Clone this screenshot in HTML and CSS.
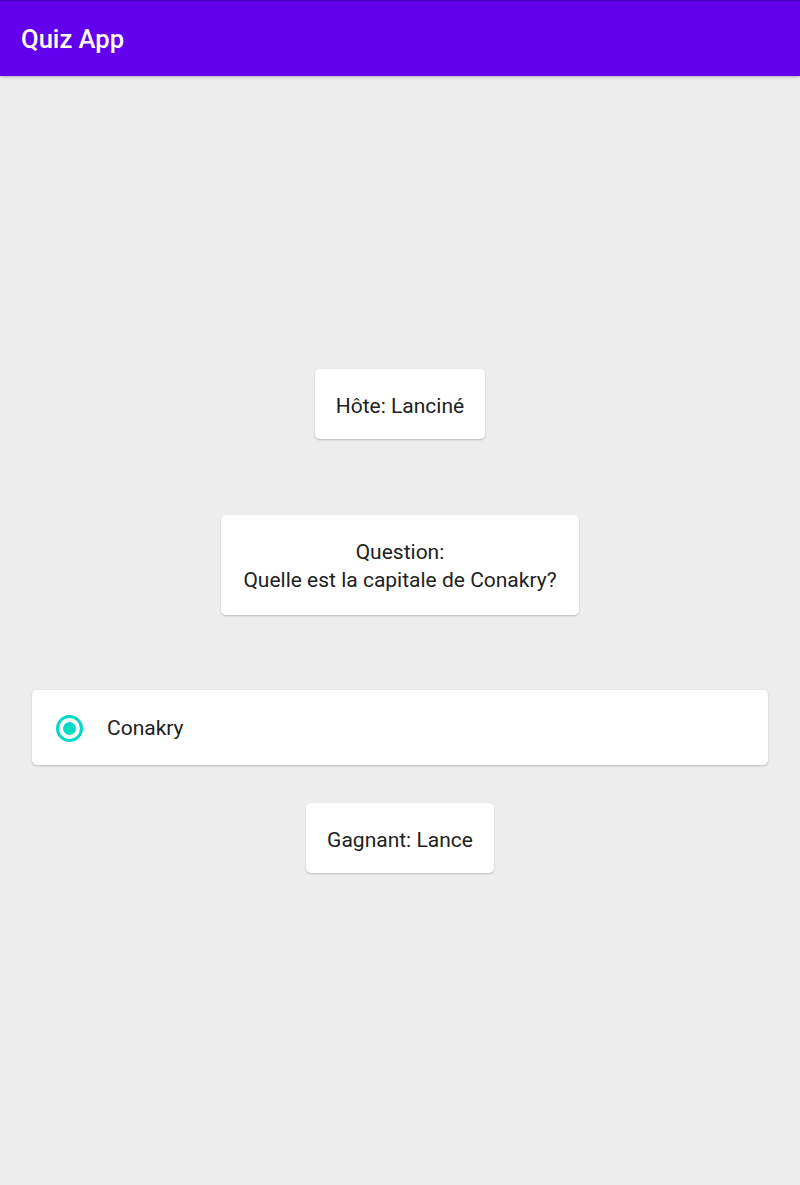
FILE: index.html
```html
<!DOCTYPE html>
<html lang="fr">
<head>
<meta charset="utf-8">
<title>Quiz App</title>
<link rel="stylesheet" href="styles.css">
</head>
<body>
<header class="appbar"><h1 class="title">Quiz App</h1></header>
<main class="content">
  <div class="card host">Hôte: Lanciné</div>
  <div class="card question">Question:<br>Quelle est la capitale de Conakry?</div>
  <div class="card option">
    <span class="radio"><span class="dot"></span></span>
    <span class="option-label">Conakry</span>
  </div>
  <div class="card winner">Gagnant: Lance</div>
</main>
</body>
</html>
```
FILE: styles.css
```css
* { box-sizing: border-box; }
html, body { margin: 0; padding: 0; }
body {
  width: 800px;
  height: 1185px;
  background: #ededed;
  font-family: Roboto, "Noto Sans", sans-serif;
  color: #212121;
  display: flex;
  flex-direction: column;
  overflow: hidden;
}
.appbar {
  height: 76px;
  flex: none;
  background: #6200ee;
  border-top: 1px solid #4a00b8;
  display: flex;
  align-items: center;
  padding-left: 21px;
  box-shadow: 0 1px 3px rgba(0,0,0,0.25);
}
.title {
  margin: 0;
  color: #ffffff;
  font-size: 25.6px;
  font-weight: 500;
  letter-spacing: 0;
}
.content {
  flex: 1;
  display: flex;
  flex-direction: column;
  align-items: center;
  padding-top: 293px;
}
.card {
  background: #ffffff;
  border-radius: 5px;
  box-shadow: 0 1px 2px rgba(0,0,0,0.22);
  font-size: 21px;
  line-height: 28px;
  padding: 23px 21px 19px;
  text-align: center;
}
.question {
  margin-top: 76px;
  padding: 23px 22px 21px;
}
.option {
  margin-top: 75px;
  width: 736px;
  height: 75px;
  display: flex;
  align-items: center;
  text-align: left;
  padding: 1px 0 0 24px;
}
.radio {
  width: 27px;
  height: 27px;
  border-radius: 50%;
  border: 3px solid #03dac5;
  display: flex;
  align-items: center;
  justify-content: center;
}
.dot {
  width: 13px;
  height: 13px;
  border-radius: 50%;
  background: #03dac5;
}
.option-label {
  margin-left: 24px;
}
.winner {
  margin-top: 38px;
}
```
